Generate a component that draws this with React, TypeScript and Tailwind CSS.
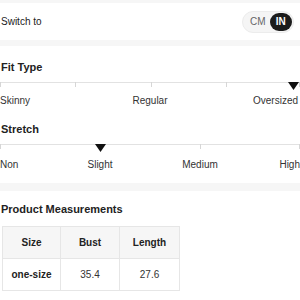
import React from "react";

const Tri = ({ left }: { left: number }) => (
  <svg
    width="11"
    height="8"
    viewBox="0 0 11 8"
    className="absolute top-[0px]"
    style={{ left: left - 5.5 }}
  >
    <polygon points="0,0 11,0 5.5,8" fill="#111" />
  </svg>
);

const Tick = ({ left }: { left: number }) => (
  <div className="absolute top-0 w-px h-[5px] bg-[#d6d6d6]" style={{ left }} />
);

export default function App() {
  return (
    <div
      className="w-[300px] h-[300px] overflow-hidden bg-white text-[#222]"
      style={{ fontFamily: '"Liberation Sans", Arial, sans-serif' }}
    >
      <div className="h-[3px] bg-[#f6f6f6]" />
      <div className="h-[37px] flex items-center justify-between pl-[1px] pr-[6px]">
        <span className="text-[10px]">Switch to</span>
        <div className="flex items-center h-[22px] w-[52px] rounded-full bg-[#f5f5f5] border border-[#ececec] pl-[7px] pr-[1px] gap-[4px]">
          <span className="text-[10px] text-[#666]">CM</span>
          <span className="h-[18px] w-[24px] justify-center rounded-full bg-[#1c1c1c] text-white text-[10px] font-bold flex items-center">
            IN
          </span>
        </div>
      </div>
      <div className="h-[6px] bg-[#f6f6f6]" />

      <div className="pt-[13px]">
        <div className="text-[11px] leading-[16px] font-bold pl-[1px]">Fit Type</div>
        <div className="relative mt-[7px] h-[11px]">
          <div className="absolute top-0 left-0 right-0 h-px bg-[#e2e2e2]" />
          <Tick left={0} />
          <Tick left={75} />
          <Tick left={151} />
          <Tick left={226} />
          <Tick left={299} />
          <Tri left={293} />
        </div>
        <div className="relative h-[15px] text-[10px] leading-[15px] text-[#333]">
          <span className="absolute left-0">Skinny</span>
          <span className="absolute left-[150px] -translate-x-1/2">Regular</span>
          <span className="absolute right-[2px]">Oversized</span>
        </div>
      </div>

      <div className="pt-[13px]">
        <div className="text-[11px] leading-[16px] font-bold pl-[1px]">Stretch</div>
        <div className="relative mt-[7px] h-[13px]">
          <div className="absolute top-0 left-0 right-0 h-px bg-[#e2e2e2]" />
          <Tick left={0} />
          <Tick left={200} />
          <Tick left={299} />
          <Tri left={100} />
        </div>
        <div className="relative h-[15px] text-[10px] leading-[15px] text-[#333]">
          <span className="absolute left-0">Non</span>
          <span className="absolute left-[100px] -translate-x-1/2">Slight</span>
          <span className="absolute left-[200px] -translate-x-1/2">Medium</span>
          <span className="absolute right-0">High</span>
        </div>
      </div>

      <div className="mt-[11px] h-[8px] bg-[#f6f6f6]" />

      <div className="pt-[10px]">
        <div className="text-[11px] leading-[16px] font-bold pl-[1px]">Product Measurements</div>
        <table className="mt-[9px] ml-[2px] border-collapse text-[10px] text-center">
          <thead>
            <tr className="bg-[#f6f6f6] h-[32px]">
              <th className="w-[58px] border border-[#e6e6e6] font-bold">Size</th>
              <th className="w-[59px] border border-[#e6e6e6] font-bold">Bust</th>
              <th className="w-[60px] border border-[#e6e6e6] font-bold">Length</th>
            </tr>
          </thead>
          <tbody>
            <tr className="h-[32px]">
              <td className="border border-[#e6e6e6] font-bold">one-size</td>
              <td className="border border-[#e6e6e6] text-[#333]">35.4</td>
              <td className="border border-[#e6e6e6] text-[#333]">27.6</td>
            </tr>
          </tbody>
        </table>
      </div>
    </div>
  );
}
